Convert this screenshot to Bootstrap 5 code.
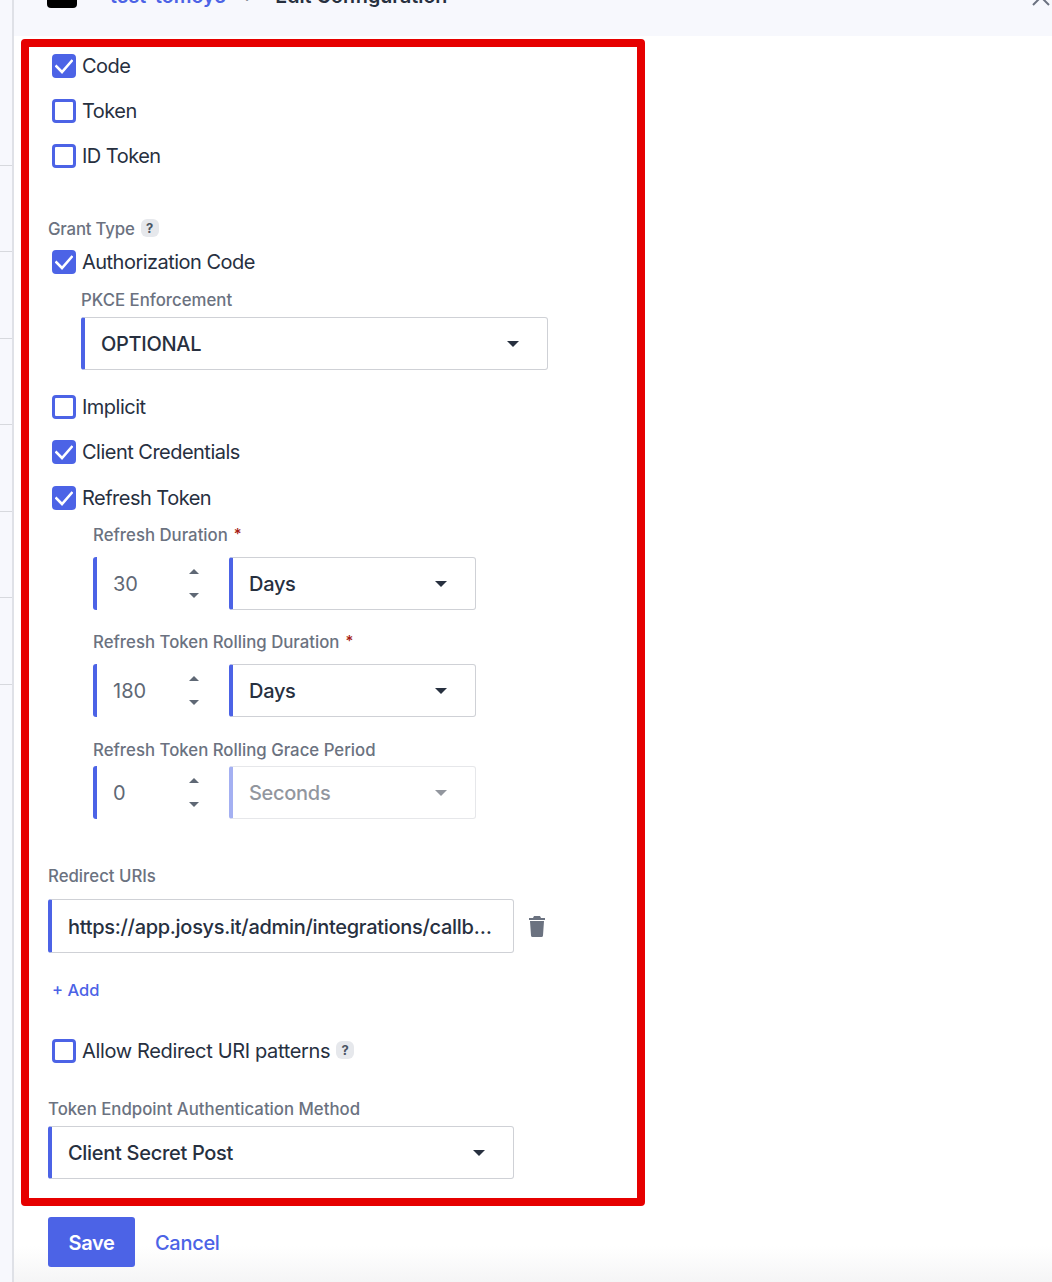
<!DOCTYPE html>
<html lang="en">
<head>
<meta charset="utf-8">
<title>Edit Configuration</title>
<link href="https://cdn.jsdelivr.net/npm/bootstrap@5.3.0/dist/css/bootstrap.min.css" rel="stylesheet">
<style>
:root{--brand:#4c63e6;--ink:#27303f;--muted:#6b7280;--line:#cfd1d6}
html,body{height:1282px;overflow:hidden}
body{font-family:Inter,"Liberation Sans",sans-serif;color:var(--ink);background:#fff;font-size:20px}
.side-strip{width:14px;flex:none;background:#f7f8fd;border-right:2px solid #dfe1e7;height:1282px}
.strip-row{height:86.6px;border-bottom:1px solid #d7d9de}
.strip-row:first-child{height:165.5px}
.top-band{height:36px;background:#f7f8fd;padding:0 0 28px 33px;overflow:visible;align-items:flex-end}
.brand-logo{width:30px;height:30px;background:#000;border-radius:4px;flex:none;margin-right:33px}
.crumb-link{color:var(--brand);font-weight:600;font-size:19.7px;line-height:24px;text-decoration:none;margin-bottom:0}
.crumb-sep{color:#6b7280;font-size:19px;line-height:24px;margin:0 23px 0 19px}
.crumb-now{font-weight:600;font-size:19.7px;line-height:24px}
.close-mark{position:absolute;right:2px;top:-12px;width:18px;height:18px}
.red-box{width:624px;height:1167px;margin:3px 0 0 7px;border:8px solid #e60000;border-radius:4px;padding:0 0 0 19px}
.tick-row{display:flex;align-items:center;height:24px;margin:0 0 0 4px;padding:0;min-height:0}
.tick-row .form-check-input{width:24px;height:24px;margin:0 6px 0 0;float:none;flex:none;border:3px solid var(--brand);border-radius:4px}
.tick-row .form-check-input:checked{background-color:var(--brand);border-color:var(--brand);background-origin:border-box;background-size:100%;background-image:url("data:image/svg+xml,%3Csvg xmlns='http://www.w3.org/2000/svg' viewBox='0 0 24 24'%3E%3Cpath fill='none' stroke='%23fff' stroke-width='2.6' d='M3.5 11.5l6.5 6.5L20.5 6'/%3E%3C/svg%3E")}
.tick-row .form-check-label{font-size:20px;line-height:24px;letter-spacing:-.52px}
.tick-row .label-wide{letter-spacing:-.35px}
.gap-45{margin-top:21px}
.field-cap{display:block;font-size:16.8px;line-height:20px;font-weight:500;color:var(--muted);margin:0}
.cap-tight{letter-spacing:-.2px}
.req-mark{color:#a61b12;margin-left:6px;font-size:15px;vertical-align:2px}
.help-chip{display:inline-flex;width:18px;height:18px;align-items:center;justify-content:center;background:#e6e8ec;border-radius:6px;font-size:13px;font-weight:700;color:#4b5563;margin-left:6px;letter-spacing:0}
.chip-grant{vertical-align:2px}
.chip-allow{vertical-align:3px}
.brand-select,.brand-input{height:53px;border:1px solid var(--line);border-left:4px solid var(--brand);border-radius:3px;font-size:20px;font-weight:500;color:var(--ink);padding:0 16px;line-height:1.2;letter-spacing:-.3px}
.brand-select{background-image:url("data:image/svg+xml,%3Csvg xmlns='http://www.w3.org/2000/svg' viewBox='0 0 12 6'%3E%3Cpath fill='%2327303f' d='M0 0h12L6 6z'/%3E%3C/svg%3E");background-size:12px 6px;background-position:right 28px center;box-shadow:none}
.brand-select:disabled{background-color:#fff;opacity:.5}
.pkce-wrap{margin:7px 0 0 33px;width:467px}
.pkce-cap{margin:16px 0 0 33px}
.refresh-wrap{margin-left:45px}
.dur-row{display:flex;gap:0;margin-top:12px;height:53px}
.num-box{width:136px;height:53px;flex:none;display:flex;align-items:center;justify-content:space-between;border-left:4px solid var(--brand);border-radius:3px;padding:0 30px 0 16px;margin:0}
.num-value{width:60px;border:0;padding:0;font-size:20px;font-weight:400;color:#5f6875;background:transparent;outline:0}
.spin-col{display:flex;flex-direction:column;gap:19px;width:10px}
.spin-up,.spin-down{width:0;height:0;border-left:5px solid transparent;border-right:5px solid transparent}
.spin-up{border-bottom:5px solid #5f6875}
.spin-down{border-top:5px solid #5f6875}
.dur-select{width:247px;flex:none;background-position:right 28px center}
.uri-row{width:466px;position:relative}
.uri-input{height:54px;text-overflow:ellipsis;padding-top:2px}
.trash-mark{position:absolute;left:481px;top:17px;width:16px;height:21px}
.add-link{display:block;color:var(--brand);font-size:16.5px;font-weight:500;line-height:20px;text-decoration:none;margin:27px 0 0 4px}
.auth-select{width:466px;margin-top:7px;background-position:right 28px center}
.foot-bar{height:76px;padding:11px 0 0 34px;gap:20px;align-items:flex-start;background:linear-gradient(#fff 40px,#f5f5f6 76px)}
.save-btn{width:87px;height:50px;background:var(--brand);border:0;border-radius:3px;color:#fff;font-size:20px;font-weight:600;padding:2px 0 0;letter-spacing:-.4px}
.cancel-link{color:var(--brand);font-size:20px;font-weight:500;text-decoration:none;line-height:52px;letter-spacing:-.3px}
</style>
</head>
<body>
<div class="d-flex">
  <div class="side-strip">
    <div class="strip-row"></div><div class="strip-row"></div><div class="strip-row"></div><div class="strip-row"></div><div class="strip-row"></div><div class="strip-row"></div><div class="strip-row"></div>
  </div>
  <div class="flex-grow-1">
    <div class="top-band d-flex position-relative">
      <div class="brand-logo"></div>
      <a class="crumb-link" href="#">test-tomoye</a>
      <span class="crumb-sep">›</span>
      <span class="crumb-now">Edit Configuration</span>
      <svg class="close-mark" viewBox="0 0 18 18"><path d="M1 1l16 16M17 1L1 17" stroke="#6b7280" stroke-width="2" fill="none"/></svg>
    </div>
    <div class="red-box">
      <div class="form-check tick-row" style="margin-top:7px"><input class="form-check-input" type="checkbox" checked id="c1"><label class="form-check-label" for="c1">Code</label></div>
      <div class="form-check tick-row gap-45"><input class="form-check-input" type="checkbox" id="c2"><label class="form-check-label" for="c2">Token</label></div>
      <div class="form-check tick-row gap-45"><input class="form-check-input" type="checkbox" id="c3"><label class="form-check-label" for="c3">ID Token</label></div>

      <label class="field-cap cap-tight" style="margin-top:51px">Grant Type<span class="help-chip chip-grant">?</span></label>
      <div class="form-check tick-row" style="margin-top:11px"><input class="form-check-input" type="checkbox" checked id="c4"><label class="form-check-label" for="c4">Authorization Code</label></div>
      <label class="field-cap pkce-cap">PKCE Enforcement</label>
      <div class="pkce-wrap"><select class="form-select brand-select"><option>OPTIONAL</option></select></div>
      <div class="form-check tick-row" style="margin-top:25px"><input class="form-check-input" type="checkbox" id="c5"><label class="form-check-label" for="c5">Implicit</label></div>
      <div class="form-check tick-row gap-45"><input class="form-check-input" type="checkbox" checked id="c6"><label class="form-check-label" for="c6">Client Credentials</label></div>
      <div class="form-check tick-row" style="margin-top:22px"><input class="form-check-input" type="checkbox" checked id="c7"><label class="form-check-label" for="c7">Refresh Token</label></div>

      <div class="refresh-wrap">
        <label class="field-cap" style="margin-top:14px">Refresh Duration<span class="req-mark">*</span></label>
        <div class="dur-row">
          <div class="num-box"><input class="num-value" type="text" value="30"><span class="spin-col"><span class="spin-up"></span><span class="spin-down"></span></span></div>
          <select class="form-select brand-select dur-select"><option>Days</option></select>
        </div>
        <label class="field-cap" style="margin-top:21px">Refresh Token Rolling Duration<span class="req-mark">*</span></label>
        <div class="dur-row">
          <div class="num-box"><input class="num-value" type="text" value="180"><span class="spin-col"><span class="spin-up"></span><span class="spin-down"></span></span></div>
          <select class="form-select brand-select dur-select"><option>Days</option></select>
        </div>
        <label class="field-cap" style="margin-top:23px">Refresh Token Rolling Grace Period</label>
        <div class="dur-row" style="margin-top:6px">
          <div class="num-box"><input class="num-value" type="text" value="0"><span class="spin-col"><span class="spin-up"></span><span class="spin-down"></span></span></div>
          <select class="form-select brand-select dur-select" disabled><option>Seconds</option></select>
        </div>
      </div>

      <label class="field-cap" style="margin-top:47px">Redirect URIs</label>
      <div class="uri-row" style="margin-top:13px">
        <input class="form-control brand-input uri-input" type="text" value="https://app.josys.it/admin/integrations/callback/oidc">
        <svg class="trash-mark" viewBox="0 0 16 21"><path fill="#6b7280" d="M5 0h6l1 2h4v2H0V2h4zM1 5h14l-1 14.5a1.6 1.6 0 0 1-1.6 1.5H3.6A1.6 1.6 0 0 1 2 19.5z"/></svg>
      </div>
      <a class="add-link" href="#">+ Add</a>
      <div class="form-check tick-row" style="margin-top:39px"><input class="form-check-input" type="checkbox" id="c8"><label class="form-check-label label-wide" for="c8">Allow Redirect URI patterns<span class="help-chip chip-allow">?</span></label></div>
      <label class="field-cap" style="margin-top:36px">Token Endpoint Authentication Method</label>
      <select class="form-select brand-select auth-select"><option>Client Secret Post</option></select>
    </div>
    <div class="foot-bar d-flex">
      <button class="btn save-btn" type="button">Save</button>
      <a class="cancel-link" href="#">Cancel</a>
    </div>
  </div>
</div>
</body>
</html>
